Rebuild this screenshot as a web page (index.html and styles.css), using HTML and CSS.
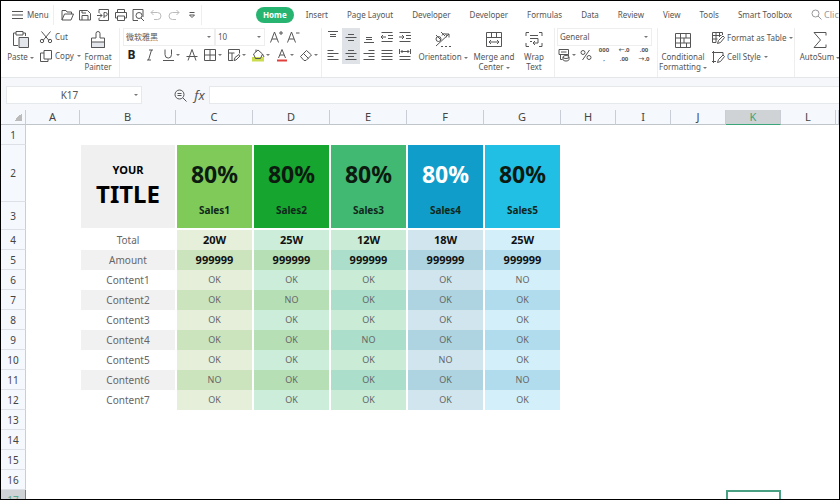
FILE: index.html
```html
<!DOCTYPE html>
<html lang="en">
<head>
    <meta charset="utf-8">
    <meta name="viewport" content="width=device-width">
    <title>Sales sheet</title>
    <link rel="stylesheet" href="styles.css">
</head>

<body>
<div class="window">

<header class="topbar">
  <button class="menu"><svg width="11" height="10" viewBox="0 0 11 10"><path d="M0 1.500h11M0 5h11M0 8.500h11"/></svg>Menu</button>
  <div class="quick">
    <button aria-label="Open"><svg width="14" height="14" viewBox="0 0 14 14"><path d="M2 12V2.500h4l1 1.500h4.500v2M2 12l2.500-6h9L11 12z"/></svg></button>
    <button aria-label="Save"><svg width="14" height="14" viewBox="0 0 14 14"><path d="M1.500 2.500h8l3 3V12h-11zM4 12V7.500h6V12M4 2.500V5h4"/></svg></button>
    <button aria-label="Export PDF"><svg width="14" height="14" viewBox="0 0 14 14"><path d="M3 5V1.500h9.500v11H3V10M1 7.500h5M4 5.500l2 2-2 2M8 10V4.500h1.500a1.500 1.500 0 0 1 0 3.500H8"/></svg></button>
    <button aria-label="Print"><svg width="14" height="14" viewBox="0 0 14 14"><path d="M3.500 4.500v-3h7v3M3.500 10h-2V4.500h11V10h-2M3.500 8h7v4.500h-7z"/></svg></button>
    <button aria-label="Preview"><svg width="14" height="14" viewBox="0 0 14 14"><path d="M7 12.500H2v-11h10V9M10 10l3 3"/><circle cx="8" cy="7.500" r="3"/></svg></button>
    <button class="faded" aria-label="Undo"><svg width="14" height="14" viewBox="0 0 14 14"><path d="M4.500 2L2 4.500 4.500 7M2 4.500h6.500a3.500 3.500 0 0 1 0 7H5"/></svg></button>
    <button class="faded" aria-label="Redo"><svg width="14" height="14" viewBox="0 0 14 14"><path d="M9.500 2L12 4.500 9.500 7M12 4.500H5.500a3.500 3.500 0 0 0 0 7H9"/></svg></button>
    <button aria-label="More"><svg width="14" height="14" viewBox="0 0 14 14"><path d="M4.500 4.500h5M4.500 7h5L7 9.500z"/></svg></button>
  </div>
  <nav class="tabs">
    <a href="#" class="active">Home</a>
    <a href="#">Insert</a>
    <a href="#">Page Layout</a>
    <a href="#">Developer</a>
    <a href="#">Developer</a>
    <a href="#">Formulas</a>
    <a href="#">Data</a>
    <a href="#">Review</a>
    <a href="#">View</a>
    <a href="#">Tools</a>
    <a href="#">Smart Toolbox</a>
  </nav>
  <label class="search"><svg width="11" height="11" viewBox="0 0 11 11"><circle cx="4.500" cy="4.500" r="3.500"/><path d="M7 7l3.500 3.500"/></svg><input type="text" placeholder="Click to find" aria-label="Search"></label>
</header>

<div class="ribbon">
  <section class="group clipboard">
    <button class="tall paste"><svg width="18" height="19" viewBox="0 0 18 19"><path d="M6 15.500H1.500V3H4M11 3h2.500v3M4 1.500h7V5H4z"/><path class="shade" d="M7 7.500h9.500v10H7z"/></svg><span>Paste<i class="caret"></i></span></button>
    <div class="stack">
      <button class="line"><svg width="14" height="14" viewBox="0 0 14 14"><path d="M2.500 1.500l7.500 9M11.500 1.500L4 10.500"/><circle cx="3" cy="11" r="1.700"/><circle cx="11" cy="11" r="1.700"/></svg>Cut</button>
      <button class="line"><svg width="14" height="14" viewBox="0 0 14 14"><path d="M5 1.500h7.500v8.500H5zM5 4H1.500v8.500H9V10"/></svg>Copy<i class="caret"></i></button>
    </div>
    <button class="tall painter"><svg width="16" height="19" viewBox="0 0 16 19"><path d="M6 8V3.500a2 2 0 0 1 4 0V8h4.500v9.500h-13V8z"/><path class="shade" d="M1.500 12h13v5.500h-13z"/></svg><span>Format<br>Painter</span></button>
  </section>

  <section class="group font">
    <div class="row">
      <div class="combo name"><select aria-label="Font"><option>微软雅黑</option></select><i class="caret"></i></div>
      <div class="combo size"><select aria-label="Font size"><option>10</option></select><i class="caret"></i></div>
      <button aria-label="Grow font"><svg width="15" height="14" viewBox="0 0 15 14"><path d="M1.500 12.500l4-10.500 4 10.500M3 9h5M10 3h4M12 1v4"/></svg></button>
      <button aria-label="Shrink font"><svg width="15" height="14" viewBox="0 0 15 14"><path d="M1.500 12.500l4-10.500 4 10.500M3 9h5M10 3h3.500"/></svg></button>
    </div>
    <div class="row">
      <button class="bold">B</button>
      <button class="italic" aria-label="Italic"><svg width="14" height="14" viewBox="0 0 14 14"><path d="M6 2h4M4 12h4M8.500 2l-3 10"/></svg></button>
      <button class="drop" aria-label="Underline"><svg width="14" height="14" viewBox="0 0 14 14"><path d="M4 1.500v5a3 3.300 0 0 0 6.500 0v-5M2 12.500h11"/></svg><i class="caret"></i></button>
      <button aria-label="Strikethrough"><svg width="14" height="14" viewBox="0 0 14 14"><path d="M3 12.500L7 1.500l4 11M1.500 8.500h11"/></svg></button>
      <button class="drop" aria-label="Borders"><svg width="14" height="14" viewBox="0 0 14 14"><path d="M1.500 1.500h11v11h-11zM7 1.500v11M1.500 7h11"/></svg><i class="caret"></i></button>
      <button class="drop" aria-label="Cell pattern"><svg width="14" height="14" viewBox="0 0 14 14"><path d="M6 12.500H1.500v-11h11v4M1.500 5h6M5 5v7M7 12.500l1-3 4-3 1 1.500-4 4z"/></svg><i class="caret"></i></button>
      <button class="drop" aria-label="Fill colour"><svg width="14" height="14" viewBox="0 0 14 14"><path class="lime" d="M1 9h12v4.500H1z"/><path d="M2.500 6L7 2l4.500 4-2 4.500h-5zM5 4V1.500M11.500 6l1.500 3"/></svg><i class="caret"></i></button>
      <button class="drop" aria-label="Font colour"><svg width="14" height="14" viewBox="0 0 14 14"><path d="M3.500 10L7 1.500 10.500 10M5 7h4"/><path class="red" d="M2 11.500h10v2H2z"/></svg><i class="caret"></i></button>
      <button class="drop" aria-label="Clear"><svg width="14" height="14" viewBox="0 0 14 14"><path d="M1.500 8.500l6-6 5 4.500-5.500 5.500H5zM4.500 5.500l5 5"/></svg><i class="caret"></i></button>
    </div>
  </section>

  <section class="group align">
    <div class="grid">
      <button aria-label="Align top"><svg width="14" height="14" viewBox="0 0 14 14"><path d="M2 1.500h10M4 4.500h6M4 6.500h6"/></svg></button>
      <button class="on" aria-label="Align middle"><svg width="14" height="14" viewBox="0 0 14 14"><path d="M4 4.500h6M1.500 7.500h11M4 10.500h6"/></svg></button>
      <button aria-label="Align bottom"><svg width="14" height="14" viewBox="0 0 14 14"><path d="M4 7.500h6M4 9.500h6M2 12.500h10"/></svg></button>
      <button aria-label="Decrease indent"><svg width="14" height="14" viewBox="0 0 14 14"><path d="M1.500 2.500h11M8 5.500h5M8 8.500h5M1.500 11.500h11M1 7h5M3 5L1 7l2 2"/></svg></button>
      <button aria-label="Increase indent"><svg width="14" height="14" viewBox="0 0 14 14"><path d="M1.500 2.500h11M8 5.500h5M8 8.500h5M1.500 11.500h11M1 7h5M4 5l2 2-2 2"/></svg></button>
      <button aria-label="Align left"><svg width="14" height="14" viewBox="0 0 14 14"><path d="M1.500 2.500h6M1.500 5.500h11M1.500 8.500h6M1.500 11.500h11"/></svg></button>
      <button class="on" aria-label="Align center"><svg width="14" height="14" viewBox="0 0 14 14"><path d="M4 2.500h6M1.500 5.500h11M4 8.500h6M1.500 11.500h11"/></svg></button>
      <button aria-label="Align right"><svg width="14" height="14" viewBox="0 0 14 14"><path d="M6.500 2.500h6M1.500 5.500h11M6.500 8.500h6M1.500 11.500h11"/></svg></button>
      <button aria-label="Justify"><svg width="14" height="14" viewBox="0 0 14 14"><path d="M1.500 2.500h11M1.500 5.500h11M1.500 8.500h11M1.500 11.500h11"/></svg></button>
      <button aria-label="Distribute"><svg width="14" height="14" viewBox="0 0 14 14"><path d="M1.500 1v5M12.500 1v5M3 3.500h8M4.500 2L3 3.500 4.500 5M9.500 2L11 3.500 9.500 5M1.500 8.500h11M1.500 11.500h11"/></svg></button>
    </div>
    <button class="tall orient"><svg width="18" height="19" viewBox="0 0 18 19"><path d="M2 16L15 4M11.500 4H15v3.500M7 16.500h2M11 16.500h2M15 16.500h2"/><circle cx="4.500" cy="9" r="2.500"/><path d="M2 5l5 5M8 5.500a2.300 2.300 0 1 1 4 2M7 2l4 4"/></svg><span>Orientation<i class="caret"></i></span></button>
    <button class="tall merge"><svg width="18" height="19" viewBox="0 0 18 19"><path d="M1.500 2.500h15v14h-15zM1.500 7.500h15M6.500 2.500v5M11.500 2.500v5M4 12h10M6 10l-2 2 2 2M12 10l2 2-2 2"/></svg><span>Merge and<br>Center<i class="caret"></i></span></button>
    <button class="tall wrap"><svg width="18" height="19" viewBox="0 0 18 19"><path d="M1 6V2.500h3M14 2.500h3V6M1 13v3.500h3M14 16.500h3V13M5 5.500h8M5 8.500h8M5 11.500h2M13 8.500V13H8M10 11l-2 2 2 2"/></svg><span>Wrap<br>Text</span></button>
  </section>

  <section class="group number">
    <div class="combo general"><select aria-label="Number format"><option>General</option></select><i class="caret"></i></div>
    <div class="row spread">
      <button class="drop" aria-label="Currency"><svg width="14" height="14" viewBox="0 0 14 14"><path d="M2 1.500h9.500v5H2zM4 4h5.500M3.500 6.500v5h2M11.500 6.500V8"/><ellipse cx="9" cy="9" rx="3" ry="1.500"/><path d="M6 9v2.500c0 2 6 2 6 0V9"/></svg><i class="caret"></i></button>
      <button aria-label="Percent"><svg width="12" height="12" viewBox="0 0 12 12"><circle cx="3" cy="3.500" r="2"/><circle cx="9" cy="8.500" r="2"/><path d="M9.500 1l-7 10"/></svg></button>
      <button class="digits"><span>000</span><span>,</span></button>
      <button class="digits"><span>←.0</span><span>.00</span></button>
      <button class="digits"><span>.00</span><span>→.0</span></button>
    </div>
  </section>

  <section class="group style">
    <button class="tall cond"><svg width="18" height="19" viewBox="0 0 18 19"><path d="M1.500 3.500h15v14h-15zM1.500 8h15M1.500 13h15M6.500 3.500v14M12 3.500V8M10 8v5M12.500 13v4.500"/></svg><span>Conditional<br>Formatting<i class="caret"></i></span></button>
    <div class="stack">
      <button class="line"><svg width="14" height="14" viewBox="0 0 14 14"><path d="M5 11.500H1.500v-10h10V4M1.500 4.500h9M1.500 8h5M5 1.500v10M8.500 1.500V6M6.500 12.500l1-3L12 5l1.500 1.500-4 5z"/></svg>Format as Table<i class="caret"></i></button>
      <button class="line"><svg width="14" height="14" viewBox="0 0 14 14"><path d="M2.500 1v12M1 2.500h11V5M1 11.500h4M6.500 12.500l1-3L12 5l1.500 1.500-4 5z"/></svg>Cell Style<i class="caret"></i></button>
    </div>
  </section>

  <section class="group sum">
    <button class="tall"><svg width="18" height="19" viewBox="0 0 18 19"><path d="M15 5.500v-3H3L9.500 10 3 17.500h12v-3"/></svg><span>AutoSum<i class="caret"></i></span></button>
  </section>
</div>

<div class="formula">
  <div class="namebox"><input type="text" value="K17" aria-label="Name box"><button aria-label="Names"><i class="caret"></i></button></div>
  <button class="fx" aria-label="Look up"><svg width="13" height="13" viewBox="0 0 13 13"><circle cx="5.500" cy="5.500" r="4.500"/><path d="M9 9l3.500 3.500M3.500 4.500h4M3.500 6.500h4"/></svg></button>
  <button class="fx" aria-label="Insert function">fx</button>
  <input class="entry" type="text" aria-label="Formula">
</div>

<main class="sheet">
<table>
  <colgroup>
    <col class="w-head"><col class="w-first"><col class="w-label">
    <col class="w-sales" span="5">
    <col class="w-empty" span="5">
    <col>
  </colgroup>
  <thead>
    <tr><th class="corner"></th><th>A</th><th>B</th><th>C</th><th>D</th><th>E</th><th>F</th><th>G</th><th>H</th><th>I</th><th>J</th><th class="picked">K</th><th>L</th><th></th></tr>
  </thead>
  <tbody>
    <tr><th>1</th><td colspan="13"></td></tr>
    <tr class="percent"><th>2</th><td></td>
      <td class="title" rowspan="2"><small>YOUR</small>TITLE</td>
      <td class="s1">80%</td><td class="s2">80%</td><td class="s3">80%</td><td class="s4">80%</td><td class="s5">80%</td><td colspan="6"></td></tr>
    <tr class="names"><th>3</th><td></td>
      <td class="s1">Sales1</td><td class="s2">Sales2</td><td class="s3">Sales3</td><td class="s4">Sales4</td><td class="s5">Sales5</td><td colspan="6"></td></tr>
    <tr class="light strong"><th>4</th><td></td><td class="label">Total</td><td class="s1">20W</td><td class="s2">25W</td><td class="s3">12W</td><td class="s4">18W</td><td class="s5">25W</td><td colspan="6"></td></tr>
    <tr class="dark strong"><th>5</th><td></td><td class="label">Amount</td><td class="s1">999999</td><td class="s2">999999</td><td class="s3">999999</td><td class="s4">999999</td><td class="s5">999999</td><td colspan="6"></td></tr>
    <tr class="light"><th>6</th><td></td><td class="label">Content1</td><td class="s1">OK</td><td class="s2">OK</td><td class="s3">OK</td><td class="s4">OK</td><td class="s5">NO</td><td colspan="6"></td></tr>
    <tr class="dark"><th>7</th><td></td><td class="label">Content2</td><td class="s1">OK</td><td class="s2">NO</td><td class="s3">OK</td><td class="s4">OK</td><td class="s5">OK</td><td colspan="6"></td></tr>
    <tr class="light"><th>8</th><td></td><td class="label">Content3</td><td class="s1">OK</td><td class="s2">OK</td><td class="s3">OK</td><td class="s4">OK</td><td class="s5">OK</td><td colspan="6"></td></tr>
    <tr class="dark"><th>9</th><td></td><td class="label">Content4</td><td class="s1">OK</td><td class="s2">OK</td><td class="s3">NO</td><td class="s4">OK</td><td class="s5">OK</td><td colspan="6"></td></tr>
    <tr class="light"><th>10</th><td></td><td class="label">Content5</td><td class="s1">OK</td><td class="s2">OK</td><td class="s3">OK</td><td class="s4">NO</td><td class="s5">OK</td><td colspan="6"></td></tr>
    <tr class="dark"><th>11</th><td></td><td class="label">Content6</td><td class="s1">NO</td><td class="s2">OK</td><td class="s3">OK</td><td class="s4">OK</td><td class="s5">NO</td><td colspan="6"></td></tr>
    <tr class="light"><th>12</th><td></td><td class="label">Content7</td><td class="s1">OK</td><td class="s2">OK</td><td class="s3">OK</td><td class="s4">OK</td><td class="s5">OK</td><td colspan="6"></td></tr>
    <tr><th>13</th><td colspan="13"></td></tr>
    <tr><th>14</th><td colspan="13"></td></tr>
    <tr><th>15</th><td colspan="13"></td></tr>
    <tr><th>16</th><td colspan="13"></td></tr>
    <tr><th class="picked">17</th><td colspan="10"></td><td class="cursor"></td><td colspan="2"></td></tr>
  </tbody>
</table>
</main>

</div>
</body>
</html>
```
FILE: styles.css
```css
* { box-sizing: border-box; }
body {
    margin: 0;
    font-family: "Noto Sans", "Open Sans", "Noto Sans CJK SC", sans-serif;
    font-size: 8px;
    color: #555;
}
button, input, select {
    font: inherit;
    color: inherit;
    background: none;
    border: 0;
    padding: 0;
    margin: 0;
}
svg {
    flex: none;
    fill: none;
    stroke: #555;
    stroke-width: 1;
}
.shade { fill: #e3e6ea; }
.lime { fill: #cbdc4e; stroke: none; }
.red { fill: #e0403c; stroke: none; }
.window {
    height: 100vh;
    display: flex;
    flex-direction: column;
    overflow: hidden;
    border: 1px solid #000;
    background: #fff;
}
.caret {
    display: inline-block;
    flex: none;
    margin-left: 2px;
    vertical-align: middle;
    border: 2px solid transparent;
    border-top-color: #777;
    border-bottom: 0;
}

/* menu and tabs */
.topbar {
    display: flex;
    align-items: center;
    flex: none;
    height: 27px;
    overflow: hidden;
}
.menu {
    display: flex;
    align-items: center;
    flex: none;
    gap: 4px;
    width: 53px;
    height: 20px;
    padding-left: 11px;
    border-right: 1px solid #eee;
}
.quick {
    display: flex;
    flex: none;
    width: 148px;
    padding-left: 4px;
    border-right: 1px solid #eee;
}
.quick button { width: 18px; height: 20px; display: flex; align-items: center; justify-content: center; }
.faded svg { stroke: #bbb; }
.tabs {
    display: flex;
    align-items: center;
    flex: none;
    gap: 19px;
    padding-left: 54px;
}
.tabs a { color: #555; text-decoration: none; white-space: nowrap; }
.tabs .active {
    margin-right: -7px;
    padding: 0 7px;
    line-height: 16px;
    border-radius: 8px;
    background: #27b471;
    color: #fff;
    font-weight: bold;
}
.search {
    display: flex;
    align-items: center;
    gap: 2px;
    flex: 1 0 60px;
    margin-left: 19px;
    font-size: 9px;
    color: #999;
}
.search svg { stroke: #999; }
.search input { width: 60px; }
.search input::placeholder { color: #999; }

/* ribbon */
.ribbon {
    display: flex;
    flex: none;
    height: 50px;
    overflow: hidden;
    border-bottom: 1px solid #e4e7ea;
    line-height: 10px;
}
.group {
    display: flex;
    flex: none;
    border-left: 1px solid #eee;
}
.ribbon button { display: flex; align-items: center; justify-content: center; white-space: nowrap; }
.ribbon .tall {
    flex-direction: column;
    justify-content: flex-start;
    gap: 3px;
    padding-top: 2px;
}
.stack { display: flex; flex-direction: column; gap: 5px; padding-top: 2px; }
.ribbon .line { justify-content: flex-start; gap: 2px; height: 14px; }
.ribbon .line .caret { margin-left: 1px; }
.row { display: flex; align-items: center; height: 18px; }

.clipboard { width: 118px; padding-left: 5px; border: 0; }
.paste { width: 29px; }
.clipboard .stack { width: 44px; padding-left: 4px; }
.painter { width: 38px; }

.font { width: 202px; flex-direction: column; padding-left: 3px; }
.font .row + .row { gap: 1px; }
.font .row button { width: 17px; height: 18px; }
.font .row .drop { width: 23px; }
.font .row .bold { font-size: 12px; font-weight: bold; color: #222; }
.drop .caret { margin-left: 1px; }
.combo {
    display: flex;
    align-items: center;
    height: 18px;
    padding: 0 3px 0 2px;
    border: 1px solid #eee;
}
.combo select { flex: 1; min-width: 0; appearance: none; }
.name { width: 92px; }
.size { width: 50px; margin-right: 3px; }

.align { width: 233px; padding-left: 2px; }
.grid {
    display: grid;
    grid-template-columns: repeat(5, 18px);
    grid-template-rows: 18px 18px;
    align-content: start;
}
.grid .on { background: #dfe3e7; }
.orient { width: 58px; }
.merge { width: 44px; }
.wrap { width: 36px; }

.number { width: 103px; flex-direction: column; padding: 0 5px 0 2px; }
.spread { justify-content: space-between; }
.ribbon .digits {
    flex-direction: column;
    width: 16px;
    font-size: 6px;
    line-height: 9px;
    font-weight: bold;
}

.style { width: 137px; padding-left: 0; }
.cond { width: 50px; }
.style .stack { padding-left: 3px; padding-top: 3px; }
.sum { padding-left: 4px; }
.sum .tall { width: 42px; }

/* formula bar */
.formula {
    display: flex;
    align-items: center;
    flex: none;
    height: 32px;
    padding: 2px 0 0 5px;
    background: #f5f7fa;
}
.formula input { height: 18px; background: #fff; font-size: 10px; }
.namebox {
    display: flex;
    align-items: center;
    width: 136px;
    height: 18px;
    margin-right: 29px;
    background: #fff;
    border: 1px solid #e6e9ec;
}
.namebox input { flex: 1; min-width: 0; height: 16px; text-align: center; }
.namebox button { width: 9px; display: flex; align-items: center; }
.fx {
    display: flex;
    align-items: center;
    justify-content: center;
    width: 19px;
    height: 18px;
}
.formula .fx { font: italic 13px "Noto Sans", sans-serif; }
.formula .entry { flex: 1; border: 1px solid #e6e9ec; border-right: 0; }

/* sheet */
.sheet { flex: 1; min-height: 0; overflow: hidden; }
table {
    width: 100%;
    table-layout: fixed;
    border-spacing: 0;
    text-align: center;
    line-height: 14px;
}
.w-head { width: 25px; }
.w-first { width: 54px; }
.w-empty { width: 55px; }
.w-label { width: 96px; }
.w-sales { width: 77px; }
th, td { height: 20px; padding: 0; }
th {
    font-size: 10px;
    font-weight: normal;
    color: #444;
    background: #f5f8fc;
    border-right: 1px solid #c9ced6;
    border-bottom: 1px solid #dde1e7;
}
thead th { height: 15px; font-size: 11px; border-bottom-color: #c0c5ca; }
.corner {
    background: linear-gradient(135deg, #f5f8fc 50%, #bbb 50%) no-repeat right 3px bottom 3px / 8px 8px #f5f8fc;
}
thead .picked { background: #cfd3d6; color: #3aa579; border-bottom-color: #3aa579; }
tbody .picked { background: #cfd3d6; color: #5fa98c; border-right-color: #3aa579; }

.title, .label, .s1, .s2, .s3, .s4, .s5 {
    border-left: 1px solid #fff;
    border-right: 1px solid #fff;
}
.percent td { height: 57px; font-size: 23px; font-weight: bold; color: #0c1a10; }
.percent .s4 { color: #fff; }
.names td { height: 28px; font-size: 10px; font-weight: bold; color: #10281c; padding-bottom: 10px; }
.names td, .percent .title { border-bottom: 2px solid #fff; }
.percent .title {
    padding-bottom: 5px;
    background: #f0f0f0;
    font-size: 24px;
    line-height: 28px;
    color: #000;
}
.title small { display: block; font-size: 11px; line-height: 20px; }
.percent .s1, .names .s1 { background: #7fca59; }
.percent .s2, .names .s2 { background: #16a52f; }
.percent .s3, .names .s3 { background: #41b972; }
.percent .s4, .names .s4 { background: #119dca; }
.percent .s5, .names .s5 { background: #22bfe5; }

.light td, .dark td { font-size: 9px; color: #666; }
.light .label, .dark .label { font-size: 10px; }
.strong td:not(.label) { font-size: 11px; font-weight: bold; color: #111; }
.dark .label { background: #f1f1f1; }
.light .s1 { background: #e5efda; }
.light .s2 { background: #cbedda; }
.light .s3 { background: #caecd7; }
.light .s4 { background: #d0e5ee; }
.light .s5 { background: #d2effa; }
.dark .s1 { background: #cbe4bd; }
.dark .s2 { background: #b6dfb6; }
.dark .s3 { background: #abdecb; }
.dark .s4 { background: #add4e0; }
.dark .s5 { background: #b1dcee; }
.cursor { border: 2px solid #4aa083; }
```
